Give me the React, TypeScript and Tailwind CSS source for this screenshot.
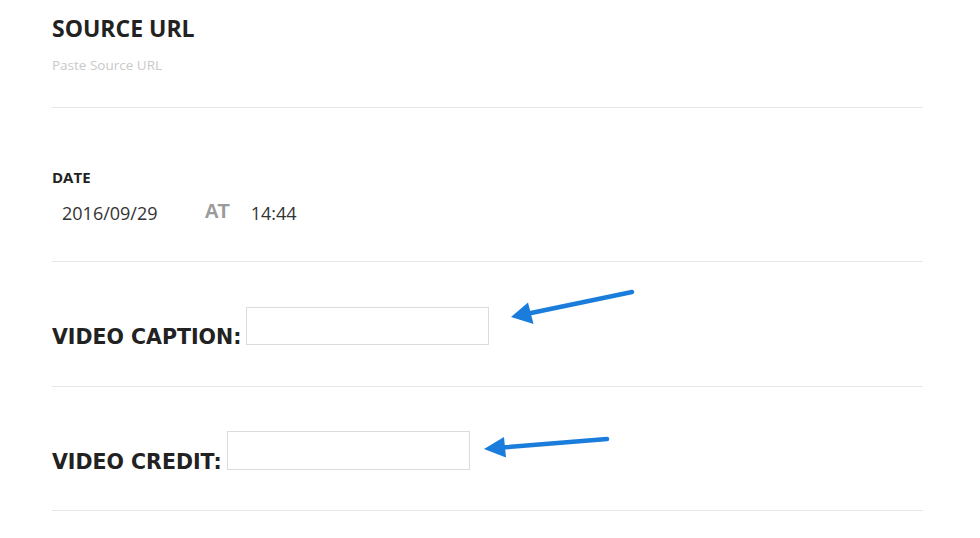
import React from 'react';

function Arrow({ tip, tail, wingA, wingB, base }: { tip: [number, number]; tail: [number, number]; wingA: [number, number]; wingB: [number, number]; base: [number, number] }) {
    return (
        <g>
            <line x1={base[0]} y1={base[1]} x2={tail[0]} y2={tail[1]} stroke="#1a7ddb" strokeWidth="4.5" strokeLinecap="round" />
            <polygon points={`${tip[0]},${tip[1]} ${wingA[0]},${wingA[1]} ${wingB[0]},${wingB[1]}`} fill="#1a7ddb" />
        </g>
    );
}

function App() {
    return (
        <div className="w-[980px] h-[538px] bg-white overflow-hidden">
            <div className="mx-[52px] w-[871px] flex flex-col">
                {/* source url */}
                <div className="h-[108px] border-b border-[#e6e6e6] pt-[17px]">
                    <h2 className="font-['Open_Sans'] font-bold text-[23px] leading-none text-[#222]">SOURCE URL</h2>
                    <p className="font-['Open_Sans'] text-[13.5px] leading-none text-[#c9c9c9] mt-[19px]">Paste Source URL</p>
                </div>

                {/* date */}
                <div className="h-[154px] border-b border-[#e6e6e6] pt-[62px]">
                    <div className="font-['Open_Sans'] font-bold text-[15px] leading-none text-[#222]">DATE</div>
                    <div className="flex items-start pl-[10px] mt-[16px]">
                        <span className="font-['Open_Sans'] text-[18px] leading-none text-[#333] mt-[3px]">2016/09/29</span>
                        <span className="font-['Liberation_Sans'] font-bold text-[20px] leading-none text-[#9a9a9a] ml-[47px]">AT</span>
                        <span className="font-['Open_Sans'] text-[18px] leading-none text-[#333] ml-[21px] mt-[3px]">14:44</span>
                    </div>
                </div>

                {/* video caption */}
                <div className="relative h-[125px] border-b border-[#e6e6e6] pt-[45px]">
                    <div className="flex items-end gap-[5px]">
                        <label className="font-['DejaVu_Sans'] font-bold text-[20.5px] leading-none text-[#222] mb-[-2px]">VIDEO CAPTION:</label>
                        <input type="text" className="w-[243px] h-[38px] border border-[#dcdcdc] bg-white outline-none" />
                    </div>
                    <svg className="absolute left-[453px] top-[23px]" width="135" height="45" viewBox="0 0 135 45">
                        <Arrow tip={[6, 32]} tail={[127, 7]} base={[26, 28]} wingA={[23, 17.5]} wingB={[28.5, 39]} />
                    </svg>
                </div>

                {/* video credit */}
                <div className="relative h-[124px] border-b border-[#e6e6e6] pt-[44px]">
                    <div className="flex items-end gap-[5px]">
                        <label className="font-['DejaVu_Sans'] font-bold text-[20.5px] leading-none text-[#222] mb-[-2px]">VIDEO CREDIT:</label>
                        <input type="text" className="w-[243px] h-[39px] border border-[#dcdcdc] bg-white outline-none" />
                    </div>
                    <svg className="absolute left-[426px] top-[41px]" width="135" height="30" viewBox="0 0 135 30">
                        <Arrow tip={[6, 21]} tail={[129, 11]} base={[27, 19.3]} wingA={[26, 9]} wingB={[28, 29.5]} />
                    </svg>
                </div>
            </div>
        </div>
    );
}

export default App;
